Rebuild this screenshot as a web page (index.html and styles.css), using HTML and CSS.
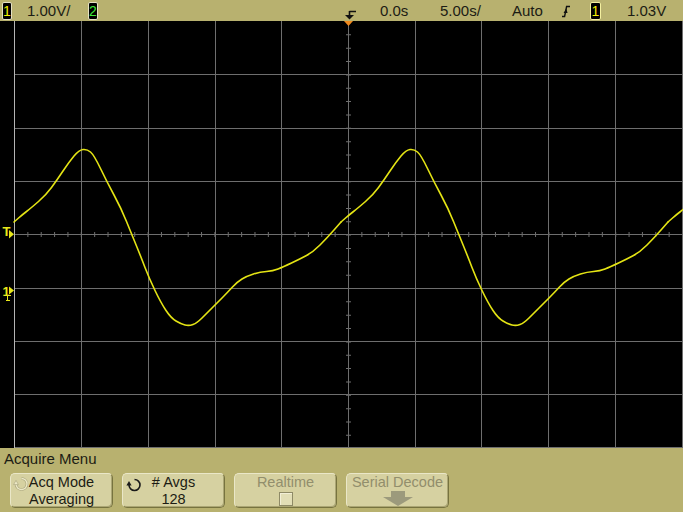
FILE: index.html
```html
<!DOCTYPE html>
<html>
<head>
<meta charset="utf-8">
<link rel="stylesheet" href="styles.css">
</head>
<body>
<div class="scope">
  <header class="status">
    <span class="badge b-left">1</span>
    <span class="field f-scale1">1.00V/</span>
    <span class="badge b-ch2">2</span>
    <span class="spacer"></span>
    <svg class="trig-pos" width="14" height="21" viewBox="0 0 14 21">
      <path d="M6.5 11.5 H13 M6.5 11 V16" stroke="#111" stroke-width="1.6" fill="none"/>
      <polygon points="2,15 11,15 6.5,19.5" fill="#111"/>
    </svg>
    <span class="field f-delay">0.0s</span>
    <span class="field f-time">5.00s/</span>
    <span class="field f-mode">Auto</span>
    <svg class="slope" width="10" height="21" viewBox="0 0 10 21">
      <path d="M1 16.5 H3.6 L5.6 6.5 H9" stroke="#111" stroke-width="1.4" fill="none"/>
      <polygon points="2.6,13 6.6,13 5.2,8.6" fill="#111"/>
    </svg>
    <span class="badge b-right">1</span>
    <span class="field f-level">1.03V</span>
  </header>

  <main class="screen">
    <svg class="grid" width="683" height="427" viewBox="0 0 683 427">
      <defs>
        <path id="period" fill="none" stroke="#e4e414" stroke-width="1.6" stroke-linejoin="round" stroke-linecap="round"
          d="M14,201 L18,197.5 Q22,194 26.5,190.5 Q31,187 38.5,180.5 Q46,174 51.5,166.5 Q57,159 63,150 Q69,141 74,135 Q79,129 83,128.5 Q87,128 90.5,131 Q94,134 100.5,147.5 Q107,161 114,174 Q121,187 126.5,200.5 Q132,214 136.5,225 Q141,236 145,246.5 Q149,257 155,269.5 Q161,282 166,289.5 Q171,297 176,300 Q181,303 185,304 Q189,305 193,303.5 Q197,302 202,297 Q207,292 212,287 Q217,282 222,277 Q227,272 232,266.5 Q237,261 242,258 Q247,255 253.5,253 Q260,251 266.5,250.5 Q273,250 278,248 Q283,246 291.5,242 Q300,238 306.5,234.5 Q313,231 320,224 Q327,217 334,209 L341,201"/>
      </defs>
      <rect x="0" y="0" width="683" height="427" fill="#000"/>
      <g stroke="#6e6e6e" stroke-width="1" shape-rendering="crispEdges">
        <path d="M81.5 0 V427 M148.5 0 V427 M215.5 0 V427 M281.5 0 V427 M348.5 0 V427 M415.5 0 V427 M481.5 0 V427 M548.5 0 V427 M615.5 0 V427 M682.5 0 V427"/>
        <path d="M14 53.5 H683 M14 107.5 H683 M14 160.5 H683 M14 213.5 H683 M14 267.5 H683 M14 320.5 H683 M14 373.5 H683 M14 426.5 H683"/>
      </g>
      <line x1="14" y1="213.5" x2="683" y2="213.5" stroke="#6e6e6e" stroke-width="5" stroke-dasharray="1 12.36"/>
      <line x1="348.5" y1="0" x2="348.5" y2="427" stroke="#6e6e6e" stroke-width="5" stroke-dasharray="1 12.35"/>
      <line x1="14.5" y1="0" x2="14.5" y2="427" stroke="#b4b4b4" stroke-width="1" shape-rendering="crispEdges"/>
      <polygon points="344,0 353,0 348.5,5" fill="#f08a1e"/>

      <use href="#period"/>
      <use href="#period" transform="translate(327 0)"/>
      <use href="#period" transform="translate(654 0)"/>

      <g fill="#e8e81a">
        <text x="2.5" y="214.5" class="marker">T</text>
        <polygon points="9,209 9,217.5 14,213.2"/>
        <text x="2.5" y="274.5" class="marker">1</text>
        <polygon points="9,265.5 9,273.5 14,269.5"/>
      </g>
      <path d="M3.5 274.5 H11 M7.5 274.5 V279 M5.5 279 H9.5" stroke="#e8e81a" stroke-width="1" fill="none" shape-rendering="crispEdges"/>
    </svg>
  </main>

  <footer class="menu">
    <div class="menu-title">Acquire Menu</div>
    <div class="softkeys">
      <div class="key">
        <svg class="key-icon" width="17" height="16" viewBox="0 0 17 16">
          <path d="M8.5 2.5 A5.5 5.5 0 1 1 3 8" stroke="#a8a47c" stroke-width="2.6" fill="none"/>
          <path d="M8.5 2.5 A5.5 5.5 0 1 1 3 8" stroke="#ece8c6" stroke-width="1.4" fill="none"/>
          <polygon points="0.6,8.6 5.4,8.6 3,4.4" fill="#ece8c6" stroke="#a8a47c" stroke-width="0.6"/>
        </svg>
        <span class="key-line">Acq Mode</span>
        <span class="key-line">Averaging</span>
      </div>
      <div class="key">
        <svg class="key-icon icon-dark" width="17" height="16" viewBox="0 0 17 16">
          <path d="M8.5 2.5 A5.5 5.5 0 1 1 3 8" stroke="#1a1a1a" stroke-width="1.6" fill="none"/>
          <polygon points="0.4,8.4 5.6,8.4 3,4" fill="#1a1a1a"/>
        </svg>
        <span class="key-line"># Avgs</span>
        <span class="key-line">128</span>
      </div>
      <div class="key key-off">
        <span class="key-line">Realtime</span>
        <span class="checkbox"></span>
      </div>
      <div class="key key-off">
        <span class="key-line">Serial Decode</span>
        <svg class="down-arrow" width="32" height="15" viewBox="0 0 32 15">
          <polygon points="9,0 23,0 23,6 31,6 16,15 1,6 9,6" fill="#9c9a7c"/>
        </svg>
      </div>
    </div>
  </footer>
</div>
</body>
</html>
```

FILE: styles.css
```css
* { box-sizing: border-box; }

html, body {
  margin: 0;
  padding: 0;
  background: #000;
}

body {
  font-family: "Liberation Sans", Arial, sans-serif;
  color: #1c1c14;
}

.scope {
  width: 683px;
  height: 512px;
  display: flex;
  flex-direction: column;
  overflow: hidden;
}

/* ---------- top status bar ---------- */
.status {
  height: 21px;
  flex: none;
  background: #b8b16f;
  display: flex;
  align-items: center;
  padding-left: 2px;
  font-size: 15px;
  line-height: 21px;
}

.field {
  flex: none;
  white-space: nowrap;
}

.badge {
  flex: none;
  height: 18px;
  background: #000;
  border: 1px solid #e6e2c4;
  border-radius: 2px;
  display: flex;
  align-items: center;
  justify-content: center;
  font-size: 14px;
  line-height: 16px;
  overflow: visible;
}

.b-left { width: 10px; color: #f2f000; }
.b-ch2 { width: 10px; color: #3ee83a; }
.b-right {
  width: 11px;
  margin-left: 19px;
  color: #f2f000;
  border-color: #f4f0a0;
}

.f-scale1 { margin-left: 15px; width: 61px; }
.spacer { flex: none; width: 245px; }
.trig-pos { flex: none; display: block; }
.f-delay { margin-left: 23px; width: 60px; }
.f-time { width: 72px; }
.f-mode { width: 49px; }
.slope { flex: none; display: block; }
.f-level { margin-left: 26px; }

/* ---------- waveform screen ---------- */
.screen {
  height: 427px;
  flex: none;
  background: #000;
}

.grid { display: block; }

.marker {
  font-family: "Liberation Sans", Arial, sans-serif;
  font-size: 13px;
  font-weight: bold;
}

/* ---------- softkey menu ---------- */
.menu {
  height: 64px;
  flex: none;
  background: #b8b16f;
}

.menu-title {
  height: 22px;
  padding-left: 4px;
  font-size: 15px;
  line-height: 21px;
}

.softkeys {
  display: flex;
  gap: 9px;
  padding-left: 10px;
  margin-top: 3px;
}

.key {
  position: relative;
  width: 103px;
  height: 35px;
  background: #d6d1a1;
  border: 1px solid;
  border-color: #eae7c8 #77733f #77733f #eae7c8;
  border-radius: 5px;
  box-shadow: inset -1px -1px 0 #aba674;
  display: flex;
  flex-direction: column;
  align-items: center;
  padding-top: 0;
  font-size: 14.5px;
  line-height: 16.7px;
  color: #1c1c14;
}

.key-line { white-space: nowrap; }

.key-icon {
  position: absolute;
  left: 2px;
  top: 2px;
}

.icon-dark { left: 3px; top: 3px; }

.key-off { color: #928e6c; }

.checkbox {
  width: 14px;
  height: 14px;
  margin-top: 1px;
  background: #e2deb6;
  border: 1px solid #8e8a66;
  box-shadow: inset 1px 1px 0 #f2efd6;
}

.down-arrow {
  display: block;
  margin-top: 0;
}
```
